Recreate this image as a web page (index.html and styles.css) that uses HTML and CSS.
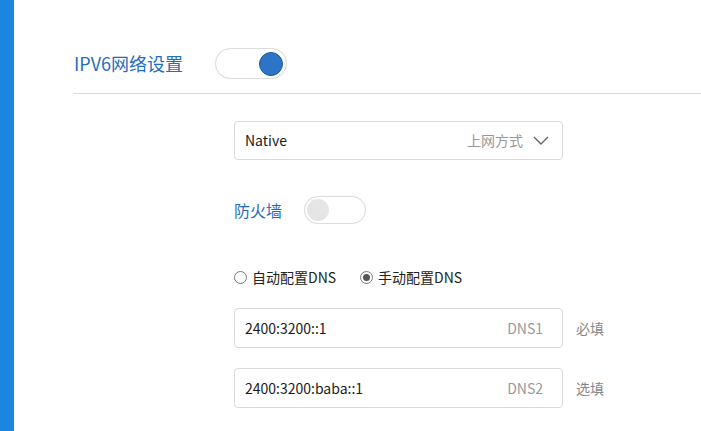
FILE: index.html
```html
<!DOCTYPE html>
<html lang="zh">
<head>
<meta charset="utf-8">
<link rel="stylesheet" href="styles.css">
</head>
<body>
<div class="page">
  <div class="sidebar"></div>
  <div class="main">
    <div class="header">
      <span class="title">IPV6网络设置</span>
      <span class="switch on"><span class="knob"></span></span>
    </div>
    <div class="form">
      <div class="select">
        <span class="value">Native</span>
        <span class="hint">上网方式</span>
        <svg class="chev" width="16" height="9" viewBox="0 0 16 9"><path d="M1 1 L8 8 L15 1" fill="none" stroke="#666" stroke-width="1.4"/></svg>
      </div>
      <div class="fw-row">
        <span class="fw-label">防火墙</span>
        <span class="switch small"><span class="knob"></span></span>
      </div>
      <div class="radios">
        <label class="radio"><span class="dot"></span>自动配置DNS</label>
        <label class="radio checked"><span class="dot"></span>手动配置DNS</label>
      </div>
      <div class="field-row first">
        <div class="field"><span class="value">2400:3200::1</span><span class="hint">DNS1</span></div>
        <span class="side">必填</span>
      </div>
      <div class="field-row">
        <div class="field"><span class="value">2400:3200:baba::1</span><span class="hint">DNS2</span></div>
        <span class="side">选填</span>
      </div>
    </div>
  </div>
</div>
</body>
</html>
```
FILE: styles.css
```css
* { box-sizing: border-box; }
html, body { margin: 0; padding: 0; background: #fff; }
body {
  font-family: "Noto Sans CJK SC", "Noto Sans", sans-serif;
  color: #222;
  width: 701px;
  height: 431px;
  overflow: hidden;
}
.page { display: flex; height: 431px; }
.sidebar { width: 14px; background: #1a86e0; flex: none; }
.main { flex: 1; padding-left: 59px; }
.header {
  display: flex;
  align-items: center;
  padding-top: 47px;
  padding-bottom: 14px;
  border-bottom: 1px solid #dadada;
  height: 94px;
}
.title {
  width: 142px;
  padding-left: 1px;
  font-size: 18px;
  color: #1f6cc0;
  line-height: 31px;
}
.switch {
  position: relative;
  display: inline-block;
  width: 72px;
  height: 31px;
  border: 1px solid #dcdcdc;
  border-radius: 16px;
  background: #fff;
  box-shadow: 0 0 1px rgba(0,0,0,0.08);
}
.switch .knob {
  position: absolute;
  top: 3px;
  left: 4px;
  width: 23px;
  height: 23px;
  border-radius: 50%;
  background: #e5e5e5;
}
.switch.on .knob {
  left: auto;
  right: 3px;
  width: 24px;
  height: 24px;
  background: #2b74c6;
  border: 1px solid #1d5aa6;
}
.switch.small { width: 62px; height: 28px; border-radius: 14px; }
.switch.small .knob { top: 2px; left: 2px; width: 22px; height: 22px; }
.form { padding-left: 161px; padding-top: 27px; width: 560px; }
.select, .field {
  display: flex;
  align-items: center;
  width: 329px;
  border: 1px solid #d9d9d9;
  border-radius: 4px;
  padding: 0 13px 0 10px;
  font-size: 14px;
}
.select { height: 39px; padding-bottom: 2px; }
.field { height: 40px; padding-right: 19px; }
.value { flex: 1; color: #1a1a1a; }
.hint { color: #999; }
.select .hint { margin-right: 10px; font-size: 14px; }
.chev { display: block; margin-top: 2px; }
.fw-row {
  display: flex;
  align-items: center;
  margin-top: 36px;
  height: 28px;
}
.fw-label { font-size: 16px; color: #1f6cc0; width: 70px; }
.radios {
  display: flex;
  align-items: center;
  margin-top: 44px;
  height: 18px;
  font-size: 14px;
  color: #222;
}
.radio { display: flex; align-items: center; margin-right: 24px; }
.dot {
  width: 13px;
  height: 13px;
  border: 1px solid #7a7a7a;
  border-radius: 50%;
  margin: 0 5px 0 0;
  position: relative;
  background: #fff;
}
.radio.checked .dot::after {
  content: "";
  position: absolute;
  left: 2px; top: 2px;
  width: 7px; height: 7px;
  border-radius: 50%;
  background: #555;
}
.field-row { display: flex; align-items: center; margin-top: 20px; }
.field-row.first { margin-top: 22px; }
.side { margin-left: 13px; font-size: 14px; color: #888; }
```
